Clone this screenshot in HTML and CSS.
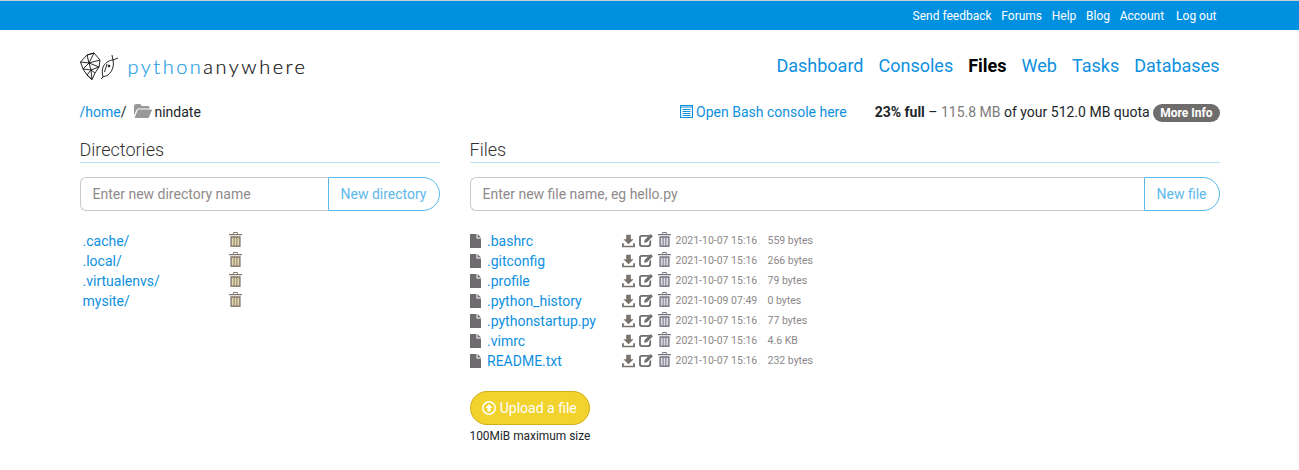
FILE: index.html
```html
<!DOCTYPE html>
<html lang="en">

<head>
    <meta charset="UTF-8">
    <title>Files | PythonAnywhere</title>
    <link rel="stylesheet" href="styles.css">
</head>

<body>
    <div class="topbar">
        <div class="container topbar-links">
            <a href="#">Send feedback</a>
            <a href="#">Forums</a>
            <a href="#">Help</a>
            <a href="#">Blog</a>
            <a href="#">Account</a>
            <a href="#" class="logout">Log out</a>
        </div>
    </div>

    <div class="container">
        <div class="header">
            <a class="logo" href="#">
                <svg class="logo-mark" viewBox="0 0 40 28" fill="none" stroke="#111" stroke-width="0.9">
                    <path d="M0.500 10 7 3 14 1 20 8 19 15 15 21 12 27.500 7 23 3 17 0.500 10ZM7 3 9 11 0.500 10M14 1 9 11 20 8M9 11 3 17 11 18 9 11M9 11 19 15 11 18 15 21M11 18 7 23 12 27.500M11 18 12 27.500M7 3 14 1" />
                    <path d="M23.500 14C26 10 30 8 33 8 34 13 33 19 28 23 26 24.500 24 24 23 25 22 21 22 17 23.500 14ZM33 8 32 3M33 8 38 6M23 25 21 27M27 12 24.500 20" />
                    <circle cx="29" cy="14" r="0.900" fill="#111" />
                </svg>
                <span class="logo-python">python</span><span class="logo-anywhere">anywhere</span>
            </a>
            <nav class="main-nav">
                <a href="#">Dashboard</a>
                <a href="#">Consoles</a>
                <a href="#" class="active">Files</a>
                <a href="#">Web</a>
                <a href="#">Tasks</a>
                <a href="#">Databases</a>
            </nav>
        </div>

        <div class="pathbar">
            <div class="breadcrumb">
                <a href="#">/home</a>/
                <svg class="folder-icon" viewBox="0 0 18 14" fill="#999">
                    <path d="M0 2C0 1 1 0 2 0H6L8 2H14C15 2 15.500 2.500 15.500 3.500V4.500H4.500C3.500 4.500 3 5 2.500 6L0 11.500Z" />
                    <path d="M4 5.500H17.500C18 5.500 18 6 17.800 6.500L15 13C14.800 13.500 14.500 14 14 14H0.500Z" />
                </svg>
                <span>nindate</span>
            </div>
            <div class="pathbar-right">
                <a class="bash-link" href="#">
                    <svg class="bash-icon" viewBox="0 0 13 13" fill="none" stroke="#0e90e0">
                        <path d="M.5.500h12v12H.5zM.5 2h12" stroke-width="1.200" />
                        <path d="M2.500 4.500h8M2.500 6.500h8M2.500 8.500h8M2.500 10.500h8" />
                    </svg>
                    Open Bash console here
                </a>
                <div class="quota">
                    <b>23% full</b> &ndash; <span class="quota-used">115.8 MB</span> of your 512.0 MB quota
                    <a class="badge" href="#">More Info</a>
                </div>
            </div>
        </div>

        <div class="columns">
            <div class="col-dirs">
                <h4>Directories</h4>
                <form class="input-group">
                    <input type="text" placeholder="Enter new directory name">
                    <button type="button">New directory</button>
                </form>
                <ul class="dir-list">
                    <li><a href="#">.cache/</a><svg class="icon trash trash-dir" viewBox="0 0 14 16"><use href="#trash" /></svg></li>
                    <li><a href="#">.local/</a><svg class="icon trash trash-dir" viewBox="0 0 14 16"><use href="#trash" /></svg></li>
                    <li><a href="#">.virtualenvs/</a><svg class="icon trash trash-dir" viewBox="0 0 14 16"><use href="#trash" /></svg></li>
                    <li><a href="#">mysite/</a><svg class="icon trash trash-dir" viewBox="0 0 14 16"><use href="#trash" /></svg></li>
                </ul>
            </div>

            <div class="col-files">
                <h4>Files</h4>
                <form class="input-group">
                    <input type="text" placeholder="Enter new file name, eg hello.py">
                    <button type="button">New file</button>
                </form>
                <ul class="file-list">
                    <li>
                        <svg class="icon file" viewBox="0 0 11 14"><use href="#file" /></svg>
                        <a class="file-name" href="#">.bashrc</a>
                        <svg class="icon dl" viewBox="0 0 14 14"><use href="#download" /></svg>
                        <svg class="icon edit" viewBox="0 0 15 14"><use href="#edit" /></svg>
                        <svg class="icon trash" viewBox="0 0 14 16"><use href="#trash" /></svg>
                        <span class="file-date">2021-10-07 15:16</span>
                        <span class="file-size">559 bytes</span>
                    </li>
                    <li>
                        <svg class="icon file" viewBox="0 0 11 14"><use href="#file" /></svg>
                        <a class="file-name" href="#">.gitconfig</a>
                        <svg class="icon dl" viewBox="0 0 14 14"><use href="#download" /></svg>
                        <svg class="icon edit" viewBox="0 0 15 14"><use href="#edit" /></svg>
                        <svg class="icon trash" viewBox="0 0 14 16"><use href="#trash" /></svg>
                        <span class="file-date">2021-10-07 15:16</span>
                        <span class="file-size">266 bytes</span>
                    </li>
                    <li>
                        <svg class="icon file" viewBox="0 0 11 14"><use href="#file" /></svg>
                        <a class="file-name" href="#">.profile</a>
                        <svg class="icon dl" viewBox="0 0 14 14"><use href="#download" /></svg>
                        <svg class="icon edit" viewBox="0 0 15 14"><use href="#edit" /></svg>
                        <svg class="icon trash" viewBox="0 0 14 16"><use href="#trash" /></svg>
                        <span class="file-date">2021-10-07 15:16</span>
                        <span class="file-size">79 bytes</span>
                    </li>
                    <li>
                        <svg class="icon file" viewBox="0 0 11 14"><use href="#file" /></svg>
                        <a class="file-name" href="#">.python_history</a>
                        <svg class="icon dl" viewBox="0 0 14 14"><use href="#download" /></svg>
                        <svg class="icon edit" viewBox="0 0 15 14"><use href="#edit" /></svg>
                        <svg class="icon trash" viewBox="0 0 14 16"><use href="#trash" /></svg>
                        <span class="file-date">2021-10-09 07:49</span>
                        <span class="file-size">0 bytes</span>
                    </li>
                    <li>
                        <svg class="icon file" viewBox="0 0 11 14"><use href="#file" /></svg>
                        <a class="file-name" href="#">.pythonstartup.py</a>
                        <svg class="icon dl" viewBox="0 0 14 14"><use href="#download" /></svg>
                        <svg class="icon edit" viewBox="0 0 15 14"><use href="#edit" /></svg>
                        <svg class="icon trash" viewBox="0 0 14 16"><use href="#trash" /></svg>
                        <span class="file-date">2021-10-07 15:16</span>
                        <span class="file-size">77 bytes</span>
                    </li>
                    <li>
                        <svg class="icon file" viewBox="0 0 11 14"><use href="#file" /></svg>
                        <a class="file-name" href="#">.vimrc</a>
                        <svg class="icon dl" viewBox="0 0 14 14"><use href="#download" /></svg>
                        <svg class="icon edit" viewBox="0 0 15 14"><use href="#edit" /></svg>
                        <svg class="icon trash" viewBox="0 0 14 16"><use href="#trash" /></svg>
                        <span class="file-date">2021-10-07 15:16</span>
                        <span class="file-size">4.6 KB</span>
                    </li>
                    <li>
                        <svg class="icon file" viewBox="0 0 11 14"><use href="#file" /></svg>
                        <a class="file-name" href="#">README.txt</a>
                        <svg class="icon dl" viewBox="0 0 14 14"><use href="#download" /></svg>
                        <svg class="icon edit" viewBox="0 0 15 14"><use href="#edit" /></svg>
                        <svg class="icon trash" viewBox="0 0 14 16"><use href="#trash" /></svg>
                        <span class="file-date">2021-10-07 15:16</span>
                        <span class="file-size">232 bytes</span>
                    </li>
                </ul>

                <button class="upload-btn" type="button">
                    <svg class="upload-icon" viewBox="0 0 14 14">
                        <circle cx="7" cy="7" r="6.200" fill="none" stroke="#fff" stroke-width="1.500" />
                        <path fill="#fff" d="M7 3 10.500 7H8.500V10.500H5.500V7H3.500Z" />
                    </svg>
                    Upload a file
                </button>
                <div class="upload-note">100MiB maximum size</div>
            </div>
        </div>
    </div>

    <!-- shared icons -->
    <svg class="icon-defs" xmlns="http://www.w3.org/2000/svg">
        <symbol id="file" viewBox="0 0 11 14">
            <path d="M0 0H6.500V4.500H11V14H0ZM7.500 0 11 3.500H7.500Z" fill="currentColor" />
        </symbol>
        <symbol id="download" viewBox="0 0 14 14">
            <path d="M4.500 0H9.500V5H12.500L7 10.500 1.500 5H4.500ZM0 9.500H2V12H12V9.500H14V14H0Z" fill="currentColor" />
        </symbol>
        <symbol id="edit" viewBox="0 0 15 14">
            <path d="M10 3H3.500C2.500 3 2 3.500 2 4.500V10.500C2 11.500 2.500 12 3.500 12H9.500C10.500 12 11 11.500 11 10.500V8L13 6V11C13 13 12 14 10 14H3C1 14 0 13 0 11V4C0 2 1 1 3 1H12Z" fill="currentColor" />
            <path d="M12.500 0 15 2.500 8.500 9 5.500 9.500 6 6.500Z" fill="currentColor" />
        </symbol>
        <symbol id="trash" viewBox="0 0 14 16">
            <path d="M5 0H9L10 2H14V3.500H0V2H4ZM5.500 1 5 2H9L8.500 1Z" fill="currentColor" fill-rule="evenodd" />
            <path d="M1.500 4.500H12.500V16H1.500Z" fill="currentColor" />
            <path d="M3 6H5V14.500H3ZM6 6H8V14.500H6ZM9 6H11V14.500H9Z" fill="var(--stripe)" />
        </symbol>
    </svg>
</body>

</html>
```

FILE: styles.css
```css
* {
    box-sizing: border-box;
}

body {
    margin: 0;
    border-top: 1px solid #c9cfd4;
    background: #fff;
    color: #212529;
    font-family: Roboto, "Liberation Sans", sans-serif;
    font-size: 14px;
    line-height: 20px;
}

a {
    color: #0e90e0;
    text-decoration: none;
}

.container {
    width: 1140px;
    margin: 0 auto;
}

.icon-defs {
    display: none;
}

/* top bar */
.topbar {
    height: 29px;
    background: #0090e0;
}

.topbar-links {
    display: flex;
    justify-content: flex-end;
    align-items: center;
    gap: 9.700px;
    height: 29px;
    padding-right: 3px;
}

.topbar-links a {
    color: #fff;
    font-size: 12px;
}

.topbar-links .logout {
    margin-left: 2.300px;
}

/* header */
.header {
    display: flex;
    justify-content: space-between;
    align-items: center;
    height: 71px;
    padding-top: 1px;
}

.logo {
    display: flex;
    align-items: center;
    font-family: Lato, sans-serif;
    font-size: 20px;
    font-weight: 300;
    letter-spacing: 2.500px;
    -webkit-text-stroke: 0.2px;
}

.logo-mark {
    width: 40px;
    height: 28px;
    margin-right: 8px;
}

.logo-python {
    color: #1d9de6;
}

.logo-anywhere {
    color: #111;
}

.main-nav {
    display: flex;
    gap: 15px;
    font-size: 18px;
}

.main-nav .active {
    color: #000;
    font-weight: 700;
}

/* path + quota row */
.pathbar {
    display: flex;
    justify-content: space-between;
    align-items: center;
    height: 22px;
}

.folder-icon {
    width: 18px;
    height: 14px;
    margin: 0 -1px 0 4px;
    vertical-align: -1px;
}

.pathbar-right {
    display: flex;
    align-items: center;
    gap: 28px;
}

.bash-icon {
    width: 13px;
    height: 13px;
    vertical-align: -1px;
}

.quota-used {
    color: #7d7a7a;
}

.badge {
    display: inline-block;
    padding: 0 7px;
    border-radius: 10px;
    background: #6f6c6c;
    color: #fff;
    font-size: 12px;
    font-weight: 700;
    line-height: 18px;
}

/* columns */
.columns {
    display: flex;
    gap: 30px;
    margin-top: 16px;
}

.col-dirs {
    width: 360px;
}

.col-files {
    width: 750px;
}

h4 {
    margin: 0 0 14px;
    padding-bottom: 1px;
    border-bottom: 1px solid #b5e3f5;
    color: #333;
    font-size: 18px;
    font-weight: 300;
    line-height: 22px;
}

.input-group {
    display: flex;
    height: 34px;
}

.input-group input {
    flex: 1;
    min-width: 0;
    padding: 0 12px;
    border: 1px solid #c9c9c9;
    border-right: 0;
    border-radius: 6px 0 0 6px;
    font-family: inherit;
    font-size: 14px;
}

.input-group input::placeholder {
    color: #8f8a8a;
    opacity: 1;
}

.input-group button {
    padding: 0 12px;
    border: 1px solid #5cb8ea;
    border-radius: 0 17px 17px 0;
    background: #fff;
    color: #5cb8ea;
    font-family: inherit;
    font-size: 14px;
}

/* directory list */
.dir-list,
.file-list {
    margin: 0;
    padding: 0;
    list-style: none;
}

.dir-list {
    margin-top: 20px;
    padding-left: 3px;
}

.dir-list li {
    display: flex;
    align-items: center;
    height: 20px;
}

.dir-list a {
    width: 146px;
}

/* file list */
.file-list {
    margin-top: 20px;
}

.file-list li {
    display: flex;
    align-items: center;
    height: 20px;
}

.icon {
    flex: none;
}

.file {
    width: 11px;
    height: 14px;
    margin-right: 6.500px;
    color: #6f6c70;
}

.file-name {
    width: 134.500px;
}

.dl {
    width: 13px;
    height: 14px;
    margin: 0 4px 1px 0;
    color: #7a736b;
}

.edit {
    width: 14px;
    height: 13px;
    margin: 0 5px 1px 0;
    color: #6f6f6f;
}

.trash {
    --stripe: #d9d9e6;
    width: 13px;
    height: 15px;
    margin-bottom: 3px;
    color: #7a7480;
}

.trash-dir {
    --stripe: #e0d8a8;
    color: #84776c;
}

.file-date {
    width: 92px;
    margin-left: 5px;
    color: #8c8888;
    font-size: 10.500px;
}

.file-size {
    color: #8c8888;
    font-size: 10.500px;
}

/* upload */
.upload-btn {
    display: block;
    width: 120px;
    height: 34px;
    margin-top: 20px;
    padding: 0;
    border: 1px solid #d1b01c;
    border-radius: 17px;
    background: #f2d22c;
    color: #fff;
    font-family: inherit;
    font-size: 14px;
}

.upload-icon {
    width: 14px;
    height: 14px;
    vertical-align: -2px;
}

.upload-note {
    margin-top: 1px;
    font-size: 11.900px;
    line-height: 20px;
}
```
